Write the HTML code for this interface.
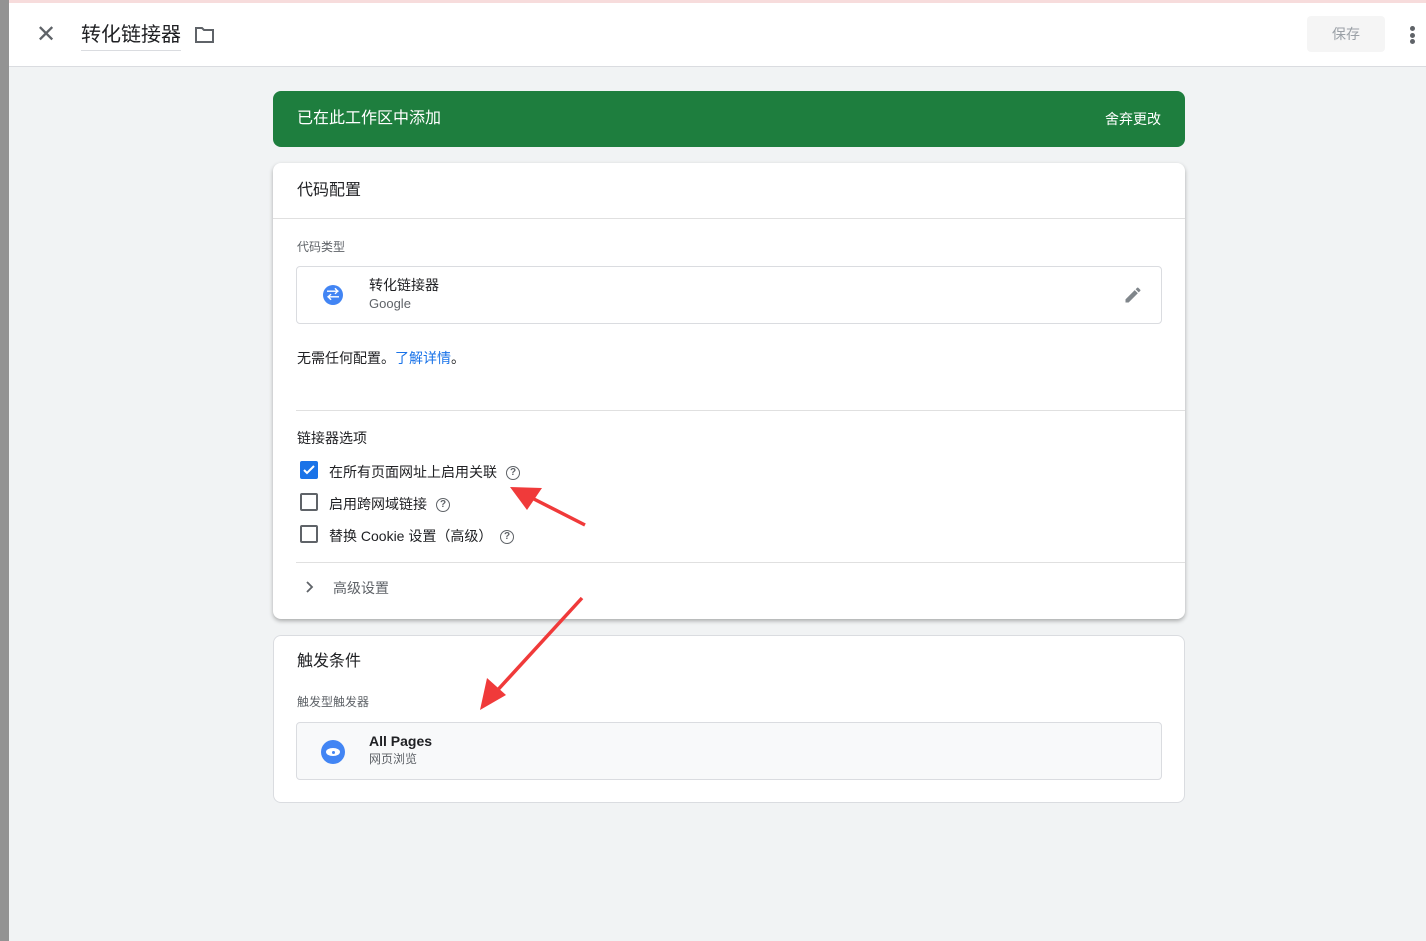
<!DOCTYPE html>
<html><head><meta charset="utf-8"><style>
*{box-sizing:border-box;margin:0;padding:0}
body{width:1426px;height:941px;overflow:hidden;background:#f1f3f4;font-family:"Liberation Sans","Noto Sans CJK SC",sans-serif;color:#202124;position:relative}
.strip{position:absolute;left:0;top:0;width:9px;height:941px;background:#939393}
.top{position:absolute;left:9px;top:3px;right:0;height:64px;background:#fff;border-bottom:1px solid #dadce0}
.pink{position:absolute;left:0;top:0;right:0;height:3px;background:#f7dcdc}
.card{position:absolute;left:273px;width:912px;background:#fff;border-radius:8px}
.abs{position:absolute;line-height:1.2}
.cb{position:absolute;width:18px;height:18px;border:2px solid #5f6368;border-radius:2px}
.q{position:absolute;width:14px;height:14px;border:1.5px solid #5f6368;border-radius:50%;font-size:10px;line-height:11px;text-align:center;color:#5f6368;font-weight:bold}
</style></head><body>
<div class="pink"></div>
<div class="strip"></div>
<div class="top">
 <div class="abs" style="left:27px;top:20px;font-size:24px;color:#5f6368;line-height:24px">✕</div>
 <div class="abs" style="left:72px;top:18px;font-size:20px;line-height:28px;color:#202124;border-bottom:1px solid #dadce0;padding-bottom:1px">转化链接器</div>
 <svg class="abs" style="left:185px;top:23px" width="22" height="18" viewBox="0 0 22 18"><path d="M2 2h6l2 2h9v12H2z" fill="none" stroke="#5f6368" stroke-width="2"/></svg>
 <div class="abs" style="left:1298px;top:13px;width:78px;height:36px;background:#f5f5f5;border-radius:4px;text-align:center;line-height:36px;font-size:14px;color:#9aa0a6">保存</div>
 <div class="abs" style="left:1401px;top:23px;width:5px;height:18px">
  <div style="width:5px;height:5px;border-radius:50%;background:#5f6368;margin-bottom:1.5px"></div><div style="width:5px;height:5px;border-radius:50%;background:#5f6368;margin-bottom:1.5px"></div><div style="width:5px;height:5px;border-radius:50%;background:#5f6368"></div>
 </div>
</div>
<div class="card" style="top:91px;height:56px;background:#1e7e3e;color:#fff">
 <div class="abs" style="left:24px;top:18px;font-size:16px">已在此工作区中添加</div>
 <div class="abs" style="right:24px;top:20px;font-size:14px">舍弃更改</div>
</div>
<div class="card" style="top:163px;height:456px;box-shadow:0 2px 4px rgba(0,0,0,.3)">
 <div class="abs" style="left:24px;top:18px;font-size:16px">代码配置</div>
 <div class="abs" style="left:0;right:0;top:55px;border-top:1px solid #e0e0e0"></div>
 <div class="abs" style="left:24px;top:77px;font-size:12px;color:#5f6368">代码类型</div>
 <div class="abs" style="left:23px;top:103px;width:866px;height:58px;border:1px solid #dadce0;border-radius:4px">
  <div class="abs" style="left:26px;top:18px;width:20px;height:20px;border-radius:50%;background:#4285f4;color:#fff;font-size:13px;line-height:20px;text-align:center;font-weight:bold">⇄</div>
  <div class="abs" style="left:72px;top:10px;font-size:14px">转化链接器</div>
  <div class="abs" style="left:72px;top:29px;font-size:13px;color:#5f6368">Google</div>
  <svg class="abs" style="left:826px;top:18px" width="20" height="20" viewBox="0 0 24 24"><path d="M3 17.25V21h3.75L17.81 9.94l-3.75-3.75L3 17.25zM20.71 7.04a1 1 0 000-1.41l-2.34-2.34a1 1 0 00-1.41 0l-1.83 1.83 3.75 3.75 1.83-1.83z" fill="#80868b"/></svg>
 </div>
 <div class="abs" style="left:24px;top:187px;font-size:14px">无需任何配置。<span style="color:#1a73e8">了解详情</span>。</div>
 <div class="abs" style="left:23px;right:0;top:247px;border-top:1px solid #e0e0e0"></div>
 <div class="abs" style="left:24px;top:267px;font-size:14px">链接器选项</div>
 <div class="cb" style="left:27px;top:298px;background:#1a73e8;border-color:#1a73e8"><svg width="14" height="14" viewBox="0 0 14 14" style="display:block"><path d="M2 7l3 3 7-7" stroke="#fff" stroke-width="2" fill="none"/></svg></div>
 <div class="abs" style="left:56px;top:301px;font-size:14px">在所有页面网址上启用关联</div>
 <div class="q" style="left:233px;top:303px">?</div>
 <div class="cb" style="left:27px;top:330px"></div>
 <div class="abs" style="left:56px;top:333px;font-size:14px">启用跨网域链接</div>
 <div class="q" style="left:163px;top:335px">?</div>
 <div class="cb" style="left:27px;top:362px"></div>
 <div class="abs" style="left:56px;top:365px;font-size:14px">替换 Cookie 设置（高级）</div>
 <div class="q" style="left:227px;top:367px">?</div>
 <div class="abs" style="left:23px;right:0;top:399px;border-top:1px solid #e0e0e0"></div>
 <svg class="abs" style="left:31px;top:418px" width="10" height="12" viewBox="0 0 10 12"><path d="M3 1l5 5-5 5" stroke="#5f6368" stroke-width="1.8" fill="none"/></svg>
 <div class="abs" style="left:60px;top:417px;font-size:14px;color:#5f6368">高级设置</div>
</div>
<div class="card" style="top:635px;height:168px;border:1px solid #dadce0">
 <div class="abs" style="left:23px;top:16px;font-size:16px">触发条件</div>
 <div class="abs" style="left:23px;top:59px;font-size:12px;color:#5f6368">触发型触发器</div>
 <div class="abs" style="left:22px;top:86px;width:866px;height:58px;border:1px solid #dadce0;border-radius:4px;background:#f8f9fa">
  <div class="abs" style="left:24px;top:17px;width:24px;height:24px;border-radius:50%;background:#4285f4"><div style="position:absolute;left:5px;top:8px;width:14px;height:8px;border-radius:50%;background:#fff"></div><div style="position:absolute;left:9.5px;top:9.5px;width:5px;height:5px;border-radius:50%;background:#4285f4;border:1px solid #fff"></div></div>
  <div class="abs" style="left:72px;top:10px;font-size:14px;font-weight:bold">All Pages</div>
  <div class="abs" style="left:72px;top:29px;font-size:12px;color:#5f6368">网页浏览</div>
 </div>
</div>
<svg class="abs" style="left:0;top:0" width="1426" height="941">
 <path d="M585 525 L528 496" stroke="#f03a3a" stroke-width="3.5"/>
 <polygon points="510,487 542,488 527,510" fill="#f03a3a"/>
 <path d="M582 598 L494 694" stroke="#f03a3a" stroke-width="3.5"/>
 <polygon points="480,710 487,678 506,695" fill="#f03a3a"/>
</svg>
</body></html>
